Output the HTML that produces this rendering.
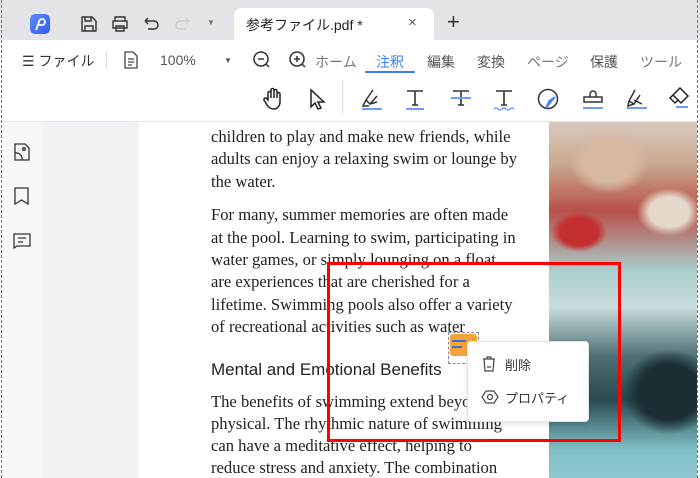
<!DOCTYPE html>
<html><head><meta charset="utf-8"><style>
*{margin:0;padding:0;box-sizing:border-box}
body{width:700px;height:478px;overflow:hidden;background:#fff;font-family:"Liberation Sans","Noto Sans CJK JP",sans-serif;position:relative}
.abs{position:absolute}
.tabbar{left:0;top:0;width:700px;height:40px;background:#e3e4e8}
.tab{left:234px;top:8px;width:200px;height:32px;background:#fff;border-radius:8px 8px 0 0}
.t{position:absolute;white-space:nowrap}
.serif{font-family:"Liberation Serif","DejaVu Serif",serif;font-size:16.6px;color:#222;left:211px}
svg{position:absolute;overflow:visible}
</style></head><body>
<div class="abs tabbar"></div>
<div class="abs tab"></div>
<div class="abs" style="left:30px;top:14px;width:20px;height:20px;border-radius:5px;background:linear-gradient(135deg,#5b8cff,#2f5cf0)"></div>
<svg style="left:34px;top:17px" width="12" height="14" fill="none" stroke="#fff" stroke-width="1.8"><path d="M2 13L5 5a3 3 0 1 1 3 3H4"/></svg>
<svg style="left:80px;top:15px" width="18" height="18" fill="none" stroke="#333" stroke-width="1.4"><path d="M2 2h10l4 4v10H2z M5 2v4h6V2 M5 16v-5h8v5"/></svg>
<svg style="left:111px;top:15px" width="18" height="18" fill="none" stroke="#333" stroke-width="1.4"><path d="M4 6V2h10v4 M2 6h14v7H2z M5 11h8v5H5z"/></svg>
<svg style="left:143px;top:16px" width="18" height="14" fill="none" stroke="#333" stroke-width="1.4"><path d="M2 5h9a4 4 0 0 1 0 8H5 M2 5l3-3 M2 5l3 3"/></svg>
<svg style="left:173px;top:16px" width="18" height="14" fill="none" stroke="#ccc" stroke-width="1.4"><path d="M16 5H7a4 4 0 0 0 0 8h6 M16 5l-3-3 M16 5l-3 3"/></svg>
<div class="t" style="left:207px;top:18px;font-size:8px;color:#777">▼</div>
<div class="t" style="left:246px;top:15px;font-size:14px;color:#222">参考ファイル.pdf *</div>
<div class="t" style="left:408px;top:14px;font-size:15px;color:#666">×</div>
<div class="t" style="left:447px;top:9px;font-size:22px;color:#333;font-weight:300">+</div>
<div class="t" style="left:22px;top:51px;font-size:14px;color:#333">☰ ファイル</div>
<div class="abs" style="left:106px;top:51px;width:1px;height:18px;background:#ddd"></div>
<svg style="left:124px;top:51px" width="14" height="18" fill="none" stroke="#444" stroke-width="1.3"><path d="M1 1h8l4 4v12H1z M4 8h6 M4 11h6 M4 14h4"/></svg>
<div class="t" style="left:160px;top:52px;font-size:14px;color:#555">100%</div>
<div class="t" style="left:224px;top:56px;font-size:8px;color:#555">▼</div>
<svg style="left:253px;top:51px" width="18" height="18" fill="none" stroke="#333" stroke-width="1.5"><circle cx="8" cy="8" r="7"/><path d="M5 8h6 M13 13l3 3"/></svg>
<svg style="left:289px;top:51px" width="18" height="18" fill="none" stroke="#333" stroke-width="1.5"><circle cx="8" cy="8" r="7"/><path d="M5 8h6 M8 5v6 M13 13l3 3"/></svg>
<div class="t" style="left:315px;top:52px;font-size:14px;color:#777">ホーム</div>
<div class="t" style="left:376px;top:52px;font-size:14px;color:#3d7bff">注釈</div>
<div class="abs" style="left:365px;top:71px;width:50px;height:2px;background:#3d7bff"></div>
<div class="t" style="left:427px;top:52px;font-size:14px;color:#555">編集</div>
<div class="t" style="left:477px;top:52px;font-size:14px;color:#555">変換</div>
<div class="t" style="left:527px;top:52px;font-size:14px;color:#777">ページ</div>
<div class="t" style="left:590px;top:52px;font-size:14px;color:#555">保護</div>
<div class="t" style="left:640px;top:52px;font-size:14px;color:#777">ツール</div>
<div class="abs" style="left:342px;top:80px;width:1px;height:34px;background:#ddd"></div>
<svg style="left:263px;top:87px" width="22" height="24" fill="none" stroke="#222" stroke-width="1.5"><path d="M5 13V6a1.5 1.5 0 0 1 3 0v5V3a1.5 1.5 0 0 1 3 0v8V4a1.5 1.5 0 0 1 3 0v7V7a1.5 1.5 0 0 1 3 0v8c0 4-3 7-6 7s-5-1-7-4l-3-5a1.5 1.5 0 0 1 3-1z"/></svg>
<svg style="left:309px;top:89px" width="18" height="22" fill="none" stroke="#222" stroke-width="1.5"><path d="M2 1v17l4-4 3 6 3-1-3-6h6z"/></svg>
<svg style="left:361px;top:88px" width="22" height="22" fill="none" stroke="#333" stroke-width="1.5"><path d="M12 2L5 12l4 4 7-8 M5 12l-3 6h6 M9 16l7-2" /><path d="M1 21h20" stroke="#6b9bff" stroke-width="2"/></svg>
<svg style="left:405px;top:89px" width="20" height="22" fill="none" stroke="#333" stroke-width="1.6"><path d="M2 2h16 M10 2v14 M7 16h6"/><path d="M1 20h18" stroke="#6b9bff" stroke-width="2"/></svg>
<svg style="left:451px;top:89px" width="20" height="20" fill="none" stroke="#333" stroke-width="1.6"><path d="M2 2h16 M10 2v14 M7 16h6"/><path d="M0 9h20" stroke="#6b9bff" stroke-width="2"/></svg>
<svg style="left:494px;top:89px" width="20" height="22" fill="none" stroke="#333" stroke-width="1.6"><path d="M2 2h16 M10 2v14 M7 16h6"/><path d="M0 20q2-2 4 0t4 0t4 0t4 0t4 0" stroke="#6b9bff" stroke-width="1.5"/></svg>
<svg style="left:537px;top:88px" width="22" height="22" fill="none" stroke="#333" stroke-width="1.5"><circle cx="11" cy="11" r="9.5"/><path d="M9 20l3-7 6-4z" stroke="#3d7bff" fill="#6b9bff"/></svg>
<svg style="left:582px;top:88px" width="22" height="22" fill="none" stroke="#333" stroke-width="1.5"><path d="M8 9V6a3 3 0 1 1 6 0v3 M2 9h18v5H2z"/><path d="M1 20h20" stroke="#6b9bff" stroke-width="2"/></svg>
<svg style="left:626px;top:88px" width="22" height="22" fill="none" stroke="#333" stroke-width="1.5"><path d="M9 2L3 13l5 3 6-9 M3 13l-1 5 6-2 M8 12l8 4"/><path d="M1 20h20" stroke="#6b9bff" stroke-width="2"/></svg>
<svg style="left:668px;top:86px" width="24" height="24" fill="none" stroke="#222" stroke-width="1.5"><path d="M12 2l8 8-7 7-8-8z M5 9l-3 3 5 5 3-3"/><path d="M8 21h12" stroke="#6b9bff" stroke-width="2"/></svg>
<div class="abs" style="left:0;top:121px;width:700px;height:1px;background:#e5e6ea"></div>
<div class="abs" style="left:0;top:122px;width:42px;height:356px;background:#f6f7f9"></div>
<div class="abs" style="left:42px;top:122px;width:97px;height:356px;background:#f1f2f5"></div>
<svg style="left:14px;top:143px" width="16" height="18" fill="none" stroke="#333" stroke-width="1.3"><path d="M1 1h10l4 4v12H1z M1 10a6 6 0 0 1 7 7"/><circle cx="10" cy="6" r="1.3"/></svg>
<svg style="left:14px;top:187px" width="15" height="18" fill="none" stroke="#333" stroke-width="1.3"><path d="M1 1h13v16l-6.5-4L1 17z"/></svg>
<svg style="left:13px;top:233px" width="18" height="16" fill="none" stroke="#333" stroke-width="1.3"><path d="M1 1h16v12H4l-3 2z M5 5h8 M5 9h5"/></svg>
<div class="abs" style="left:549px;top:122px;width:148px;height:356px;background:linear-gradient(180deg,#d8c9bd 0%,#c9a890 12%,#b85048 25%,#a9cfcc 42%,#c8dcdc 52%,#4d6f74 66%,#2a4a50 78%,#7fbfc6 92%,#8fc7cf 100%)"></div>
<div class="abs" style="left:549px;top:122px;width:148px;height:356px;background:radial-gradient(ellipse 35px 25px at 30px 110px,#c43030 55%,transparent 80%),radial-gradient(ellipse 40px 30px at 120px 90px,#e5d9cc 50%,transparent 80%),radial-gradient(ellipse 50px 40px at 60px 40px,#d9b8a0 50%,transparent 80%),radial-gradient(ellipse 55px 50px at 120px 270px,#1a2e33 55%,transparent 85%)"></div>
<div class="abs" style="left:1px;top:0;width:0;height:478px;border-left:1px dashed #3d7bff"></div>
<div class="abs" style="left:697px;top:0;width:0;height:478px;border-left:1px dashed #3d7bff"></div>
<div class="t serif" style="top:127px">children to play and make new friends, while</div>
<div class="t serif" style="top:149px">adults can enjoy a relaxing swim or lounge by</div>
<div class="t serif" style="top:172px">the water.</div>
<div class="t serif" style="top:205px">For many, summer memories are often made</div>
<div class="t serif" style="top:228px">at the pool. Learning to swim, participating in</div>
<div class="t serif" style="top:250px">water games, or simply lounging on a float</div>
<div class="t serif" style="top:272px">are experiences that are cherished for a</div>
<div class="t serif" style="top:295px">lifetime. Swimming pools also offer a variety</div>
<div class="t serif" style="top:317px">of recreational activities such as water</div>
<div class="t" style="left:211px;top:360px;font-size:17px;color:#222">Mental and Emotional Benefits</div>
<div class="t serif" style="top:392px">The benefits of swimming extend beyond</div>
<div class="t serif" style="top:414px">physical. The rhythmic nature of swimming</div>
<div class="t serif" style="top:436px">can have a meditative effect, helping to</div>
<div class="t serif" style="top:458px">reduce stress and anxiety. The combination</div>
<div class="abs" style="left:327px;top:262px;width:294px;height:180px;border:3px solid #f00"></div>
<div class="abs" style="left:448px;top:332px;width:31px;height:32px;border:1px dashed #888"></div>
<div class="abs" style="left:450px;top:334px;width:27px;height:22px;background:#f6a43a;border-radius:3px"></div>
<div class="abs" style="left:452px;top:340px;width:14px;height:2px;background:#3a6fd8"></div>
<div class="abs" style="left:452px;top:346px;width:10px;height:2px;background:#3a6fd8"></div>
<div class="abs" style="left:467px;top:341px;width:122px;height:81px;background:#fff;border:1px solid #e3e4e8;border-radius:4px;box-shadow:0 2px 6px rgba(0,0,0,.12)"></div>
<svg style="left:482px;top:356px" width="14" height="16" fill="none" stroke="#444" stroke-width="1.2"><path d="M1 3h12 M5 3V1h4v2 M2 3l1 12h8l1-12 M5 11h4"/></svg>
<div class="t" style="left:505px;top:355px;font-size:13px;color:#333">削除</div>
<svg style="left:482px;top:389px" width="16" height="16" fill="none" stroke="#444" stroke-width="1.2"><path d="M4 2h8l4 6-4 6H4L0 8z"/><circle cx="8" cy="8" r="2.5"/></svg>
<div class="t" style="left:505px;top:388px;font-size:13px;color:#333">プロパティ</div>
</body></html>
